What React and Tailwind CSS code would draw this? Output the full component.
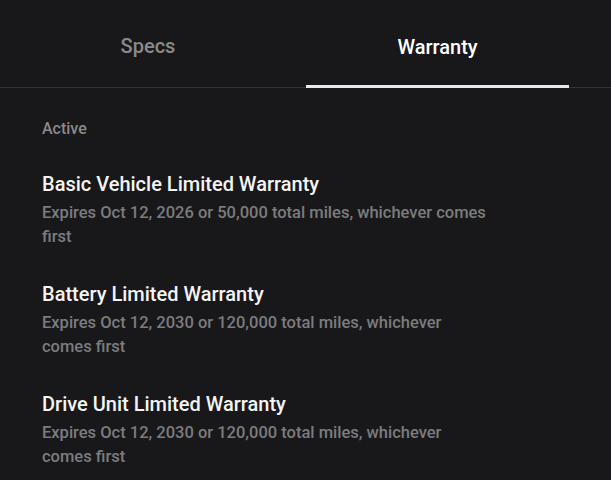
const warranties = [
  {
    title: 'Basic Vehicle Limited Warranty',
    detail: 'Expires Oct 12, 2026 or 50,000 total miles, whichever comes first',
  },
  {
    title: 'Battery Limited Warranty',
    detail: 'Expires Oct 12, 2030 or 120,000 total miles, whichever comes first',
  },
  {
    title: 'Drive Unit Limited Warranty',
    detail: 'Expires Oct 12, 2030 or 120,000 total miles, whichever comes first',
  },
];

export default function App() {
  return (
    <div className="min-h-screen w-full bg-[#18181a] font-['Roboto',sans-serif] antialiased">
      <div className="flex border-b border-[#323234]">
        <div className="ml-[16px] w-[264px] flex items-center justify-center pt-[31px] pb-[26px]">
          <span className="text-[20px] font-medium text-[#8a8a8c]">Specs</span>
        </div>
        <div className="ml-[26px] w-[263px] flex items-center justify-center pt-[31px] pb-[23px] border-b-[3px] border-[#e8e8e8] mb-[-1px]">
          <span className="text-[20px] font-medium text-white">Warranty</span>
        </div>
      </div>

      <div className="px-[42px] pt-[29px]">
        <p className="text-[16px] font-medium text-[#8a8a8c]">Active</p>
        <div className="mt-[30px] flex flex-col gap-[32px]">
          {warranties.map((w) => (
            <div key={w.title}>
              <h3 className="text-[20px] font-medium leading-[26px] text-[#f4f4f4]">{w.title}</h3>
              <p className="mt-[4px] max-w-[446px] text-[16.5px] font-medium leading-[24px] text-[#7c7c7e]">
                {w.detail}
              </p>
            </div>
          ))}
        </div>
      </div>
    </div>
  );
}
